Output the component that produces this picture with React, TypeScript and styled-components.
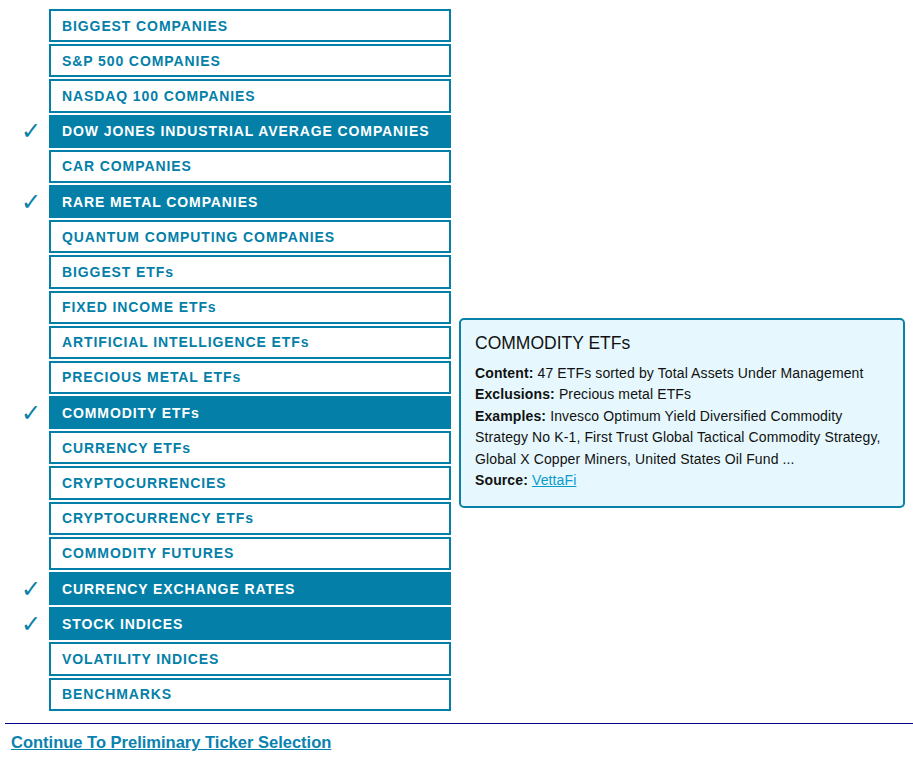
import React from "react";
import styled, { createGlobalStyle } from "styled-components";

const GlobalStyle = createGlobalStyle`
  html, body { margin: 0; padding: 0; background: #ffffff; }
  body { font-family: "Liberation Sans", Arial, sans-serif; }
`;

const Page = styled.div`
  padding-top: 9px;
  width: 913px;
`;

const List = styled.div`
  display: flex;
  flex-direction: column;
  gap: 2px;
`;

const Row = styled.div`
  position: relative;
  display: flex;
  align-items: center;
  width: 451px;
`;

const Check = styled.span`
  width: 49px;
  padding-left: 21px;
  box-sizing: border-box;
  color: #0a82a8;
  font-family: "DejaVu Sans", sans-serif;
  font-size: 24px;
  line-height: 1;
`;

const Option = styled.div<{ $selected: boolean }>`
  box-sizing: border-box;
  width: 402px;
  height: 33.2px;
  display: flex;
  align-items: center;
  padding-left: 11px;
  border: 2px solid #0480a8;
  background: ${(p) => (p.$selected ? "#0480a8" : "#ffffff")};
  color: ${(p) => (p.$selected ? "#ffffff" : "#0480a8")};
  font-weight: bold;
  font-size: 14px;
  letter-spacing: 0.9px;
  cursor: pointer;
`;

const Tooltip = styled.div`
  position: absolute;
  left: calc(100% + 8px);
  top: 50%;
  transform: translateY(-50%);
  width: 446px;
  box-sizing: border-box;
  padding: 12px 14px 14px;
  background: #e6f8fd;
  border: 2px solid #0a82a8;
  border-radius: 5px;
  color: #111;
  z-index: 2;
`;

const TipTitle = styled.div`
  font-size: 17.5px;
  line-height: 22px;
  margin-bottom: 9px;
`;

const TipLine = styled.div`
  font-size: 14px;
  line-height: 21.5px;
  letter-spacing: 0.12px;
  b { font-weight: bold; }
`;

const SourceLink = styled.a`
  color: #0a9acb;
  text-decoration: underline;
`;

const Rule = styled.div`
  margin: 12px 0 0 5px;
  height: 1px;
  background: #00008b;
`;

const Continue = styled.a`
  display: inline-block;
  margin: 9px 0 0 11px;
  font-weight: bold;
  font-size: 16.5px;
  color: #0a82b0;
  text-decoration: underline;
`;

const items: { label: string; selected?: boolean; tip?: boolean }[] = [
  { label: "BIGGEST COMPANIES" },
  { label: "S&P 500 COMPANIES" },
  { label: "NASDAQ 100 COMPANIES" },
  { label: "DOW JONES INDUSTRIAL AVERAGE COMPANIES", selected: true },
  { label: "CAR COMPANIES" },
  { label: "RARE METAL COMPANIES", selected: true },
  { label: "QUANTUM COMPUTING COMPANIES" },
  { label: "BIGGEST ETFs" },
  { label: "FIXED INCOME ETFs" },
  { label: "ARTIFICIAL INTELLIGENCE ETFs" },
  { label: "PRECIOUS METAL ETFs" },
  { label: "COMMODITY ETFs", selected: true, tip: true },
  { label: "CURRENCY ETFs" },
  { label: "CRYPTOCURRENCIES" },
  { label: "CRYPTOCURRENCY ETFs" },
  { label: "COMMODITY FUTURES" },
  { label: "CURRENCY EXCHANGE RATES", selected: true },
  { label: "STOCK INDICES", selected: true },
  { label: "VOLATILITY INDICES" },
  { label: "BENCHMARKS" },
];

export default function App() {
  return (
    <Page>
      <GlobalStyle />
      <List>
        {items.map((it) => (
          <Row key={it.label}>
            <Check>{it.selected ? "✓" : ""}</Check>
            <Option $selected={!!it.selected}>{it.label}</Option>
            {it.tip && (
              <Tooltip>
                <TipTitle>COMMODITY ETFs</TipTitle>
                <TipLine>
                  <b>Content:</b> 47 ETFs sorted by Total Assets Under Management
                </TipLine>
                <TipLine>
                  <b>Exclusions:</b> Precious metal ETFs
                </TipLine>
                <TipLine>
                  <b>Examples:</b> Invesco Optimum Yield Diversified Commodity
                  Strategy No K-1, First Trust Global Tactical Commodity Strategy,
                  Global X Copper Miners, United States Oil Fund ...
                </TipLine>
                <TipLine>
                  <b>Source:</b> <SourceLink href="#">VettaFi</SourceLink>
                </TipLine>
              </Tooltip>
            )}
          </Row>
        ))}
      </List>
      <Rule />
      <Continue href="#">Continue To Preliminary Ticker Selection</Continue>
    </Page>
  );
}
